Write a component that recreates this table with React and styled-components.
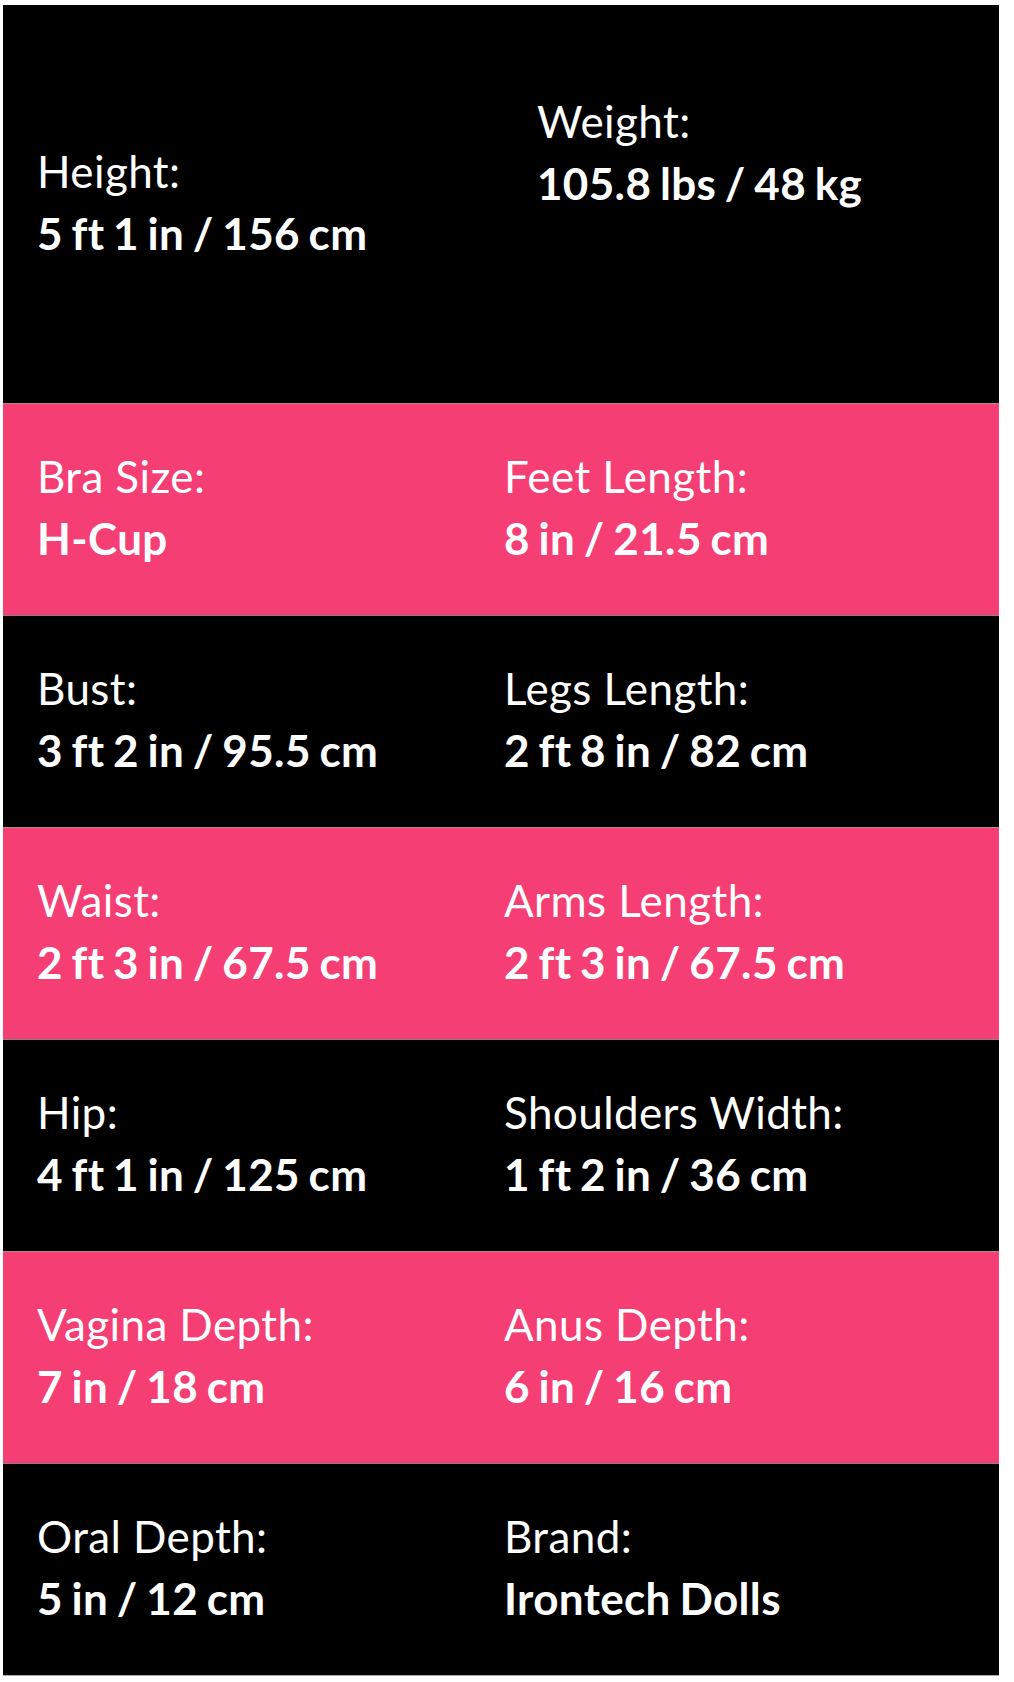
import styled, { createGlobalStyle } from "styled-components";

const GlobalStyle = createGlobalStyle`
  html, body {
    margin: 0;
    padding: 0;
    background: #ffffff;
  }
  body {
    font-family: Lato, "Open Sans", sans-serif;
  }
`;

const Page = styled.div`
  padding: 5px 15px 6px 3px;
`;

const SpecTable = styled.div`
  width: 996px;
  display: flex;
  flex-direction: column;
`;

const Row = styled.div`
  display: grid;
  grid-template-columns: ${(p) => (p.$hero ? "500px 1fr" : "467px 1fr")};
  align-items: center;
  min-height: ${(p) => (p.$hero ? "398px" : "212px")};
  background: ${(p) => (p.$pink ? "#f43e74" : "#000000")};
  border-top: ${(p) => (p.$hero ? "none" : "1px solid rgba(170, 150, 158, 0.85)")};
  box-sizing: border-box;
  &:last-child {
    min-height: 213px;
    border-bottom: 1px solid #a8a8a8;
  }
`;

const Cell = styled.div`
  padding: 0 20px 0 34px;
  padding-bottom: ${(p) => (p.$lift ? "104px" : "5px")};
  color: #ffffff;
  font-size: 44px;
  line-height: 62px;
`;

const Label = styled.div`
  font-weight: 400;
  letter-spacing: 0.4px;
  white-space: nowrap;
`;

const Value = styled.div`
  font-weight: 700;
  letter-spacing: 0.35px;
  word-spacing: -2.4px;
  white-space: nowrap;
`;

const rows = [
  {
    hero: true,
    cells: [
      ["Height:", "5 ft 1 in / 156 cm"],
      ["Weight:", "105.8 lbs / 48 kg", true],
    ],
  },
  { pink: true, cells: [["Bra Size:", "H-Cup"], ["Feet Length:", "8 in / 21.5 cm"]] },
  { cells: [["Bust:", "3 ft 2 in / 95.5 cm"], ["Legs Length:", "2 ft 8 in / 82 cm"]] },
  { pink: true, cells: [["Waist:", "2 ft 3 in / 67.5 cm"], ["Arms Length:", "2 ft 3 in / 67.5 cm"]] },
  { cells: [["Hip:", "4 ft 1 in / 125 cm"], ["Shoulders Width:", "1 ft 2 in / 36 cm"]] },
  { pink: true, cells: [["Vagina Depth:", "7 in / 18 cm"], ["Anus Depth:", "6 in / 16 cm"]] },
  { cells: [["Oral Depth:", "5 in / 12 cm"], ["Brand:", "Irontech Dolls"]] },
];

export default function App() {
  return (
    <>
      <GlobalStyle />
      <Page>
        <SpecTable>
          {rows.map((row, i) => (
            <Row key={i} $hero={row.hero} $pink={row.pink}>
              {row.cells.map(([label, value, lift], j) => (
                <Cell key={j} $lift={lift}>
                  <Label>{label}</Label>
                  <Value>{value}</Value>
                </Cell>
              ))}
            </Row>
          ))}
        </SpecTable>
      </Page>
    </>
  );
}
